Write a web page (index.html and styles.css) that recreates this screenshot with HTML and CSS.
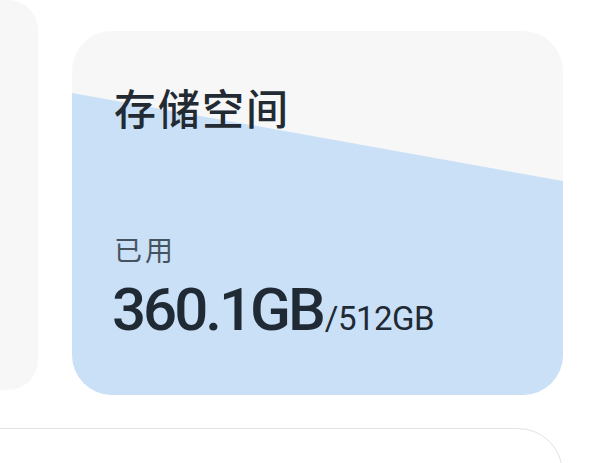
FILE: index.html
```html
<!DOCTYPE html>
<html lang="zh-CN">
<head>
<meta charset="utf-8">
<link rel="stylesheet" href="styles.css">
</head>
<body>
<div class="page">
  <div class="top-row">
    <div class="side-card"></div>
    <div class="storage-card">
      <div class="storage-content">
        <div class="title">存储空间</div>
        <div class="used-label">已用</div>
        <div class="used-value"><span class="big">360.1GB</span><span class="total">/512GB</span></div>
      </div>
    </div>
  </div>
  <div class="bottom-card"></div>
</div>
</body>
</html>
```
FILE: styles.css
```css
html, body {
  margin: 0;
  padding: 0;
  background: #ffffff;
  overflow: hidden;
}
.page {
  width: 596px;
  height: 463px;
  overflow: hidden;
}
.top-row {
  display: flex;
  align-items: flex-start;
  gap: 34px;
}
.side-card {
  width: 38px;
  height: 390px;
  background: #f7f7f7;
  border-radius: 0 30px 30px 0;
  flex: none;
}
.storage-card {
  position: relative;
  margin-top: 31px;
  width: 491px;
  height: 364px;
  background: #f7f7f7;
  border-radius: 40px;
  overflow: hidden;
  flex: none;
}
.storage-card::before {
  content: "";
  position: absolute;
  inset: 0;
  background: #c9e0f7;
  clip-path: polygon(0 62px, 100% 150px, 100% 100%, 0 100%);
}
.storage-content {
  position: relative;
  padding: 51px 40px 0 42px;
  display: flex;
  flex-direction: column;
}
.title {
  font-family: "Noto Sans CJK SC", sans-serif;
  font-size: 42px;
  line-height: 50px;
  font-weight: 500;
  letter-spacing: 2px;
  color: #222b33;
}
.used-label {
  margin-top: 100px;
  font-family: "Noto Sans CJK SC", sans-serif;
  font-size: 28px;
  line-height: 34px;
  color: #46535f;
  letter-spacing: 3px;
}
.used-value {
  margin-top: 14px;
  margin-left: -2px;
  font-family: Roboto, "Noto Sans", sans-serif;
  line-height: 60px;
  color: #1f2a34;
  white-space: nowrap;
}
.big {
  font-size: 60px;
  font-weight: 500;
  letter-spacing: -3px;
}
.total {
  font-size: 33px;
  font-weight: 400;
  letter-spacing: -0.5px;
  margin-left: 2px;
}
.bottom-card {
  margin-top: 33px;
  margin-left: -60px;
  width: 623px;
  height: 120px;
  box-sizing: border-box;
  border: 1px solid #e2e2e2;
  border-radius: 45px;
  background: #ffffff;
}
```
